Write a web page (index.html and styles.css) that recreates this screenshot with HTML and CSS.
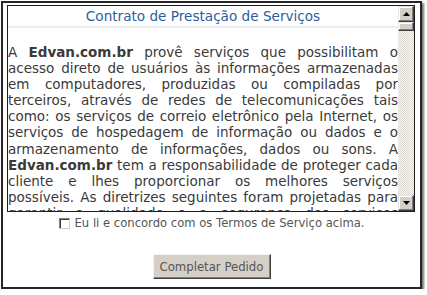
FILE: index.html
```html
<!DOCTYPE html>
<html lang="pt-BR">
<head>
<meta charset="utf-8">
<title>Contrato de Prestação de Serviços</title>
<link rel="stylesheet" href="styles.css">
</head>
<body>
<div class="frame">
  <div class="terms">
    <div class="terms-content">
      <h1 class="terms-title">Contrato de Prestação de Serviços</h1>
      <p class="terms-text">A <b>Edvan.com.br</b> provê serviços que possibilitam o acesso direto de usuários às informações armazenadas em computadores, produzidas ou compiladas por terceiros, através de redes de telecomunicações tais como: os serviços de correio eletrônico pela Internet, os serviços de hospedagem de informação ou dados e o armazenamento de informações, dados ou sons. A <b>Edvan.com.br</b> tem a responsabilidade de proteger cada cliente e lhes proporcionar os melhores serviços possíveis. As diretrizes seguintes foram projetadas para garantir a qualidade e a segurança dos serviços prestados aos clientes.</p>
    </div>
    <div class="scrollbar">
      <div class="sb-btn"><svg width="7" height="4" viewBox="0 0 7 4"><path d="M3.5 0L7 4H0z" fill="#000"/></svg></div>
      <div class="sb-thumb"></div>
      <div class="sb-track"></div>
      <div class="sb-btn"><svg width="7" height="4" viewBox="0 0 7 4"><path d="M0 0H7L3.5 4z" fill="#000"/></svg></div>
    </div>
  </div>
  <label class="agree"><span class="checkbox"></span>Eu li e concordo com os Termos de Serviço acima.</label>
  <button class="submit" type="button">Completar Pedido</button>
</div>
</body>
</html>
```

FILE: styles.css
```css
* { box-sizing: border-box; }
html, body { margin: 0; padding: 0; background: #fff; }
body { font-family: "DejaVu Sans", Verdana, sans-serif; }

.frame {
  margin: 1px 0 0 1px;
  width: 421px;
  height: 288px;
  border: 2px solid #262626;
  box-shadow: 2px 2px 2px rgba(0,0,0,0.55);
  padding: 2px 4px 0 4px;
  display: flex;
  flex-direction: column;
  align-items: flex-start;
}

.terms {
  width: 408px;
  height: 207px;
  border: 1px solid #1e1e1e;
  display: flex;
  flex: none;
  background: #fff;
}

.terms-content {
  width: 390px;
  height: 100%;
  overflow: hidden;
}

.terms-title {
  margin: 0;
  padding: 2px 0 2px;
  border-bottom: 2px solid #eeeeee;
  font-size: 13.6px;
  font-weight: normal;
  line-height: 16px;
  text-align: center;
  color: #2e5d9a;
}

.terms-text {
  margin: 16px 0 0;
  font-size: 13.5px;
  line-height: 16.1px;
  text-align: justify;
  color: #3a3a3a;
}

.scrollbar {
  width: 16px;
  height: 100%;
  display: flex;
  flex-direction: column;
}
.sb-btn, .sb-thumb {
  background: #d4d0c8;
  border: 1px solid;
  border-color: #e8e6e0 #404040 #404040 #e8e6e0;
  box-shadow: inset -1px -1px 0 #808080, inset 1px 1px 0 #fff;
}
.sb-btn {
  height: 16px;
  flex: none;
  display: flex;
  align-items: center;
  justify-content: center;
}
.sb-thumb { height: 9px; flex: none; }
.sb-track {
  flex: 1;
  background: repeating-conic-gradient(#d8d5ce 0 25%, #fbfbfa 0 50%) 0 0 / 2px 2px;
}

.agree {
  align-self: center;
  margin: 4px 0 0;
  display: flex;
  align-items: center;
  gap: 5px;
  font-size: 11.6px;
  line-height: 14px;
  color: #555;
}
.checkbox {
  width: 11px;
  height: 11px;
  border: 1px solid;
  border-color: #808080 #d4d0c8 #d4d0c8 #808080;
  box-shadow: inset 1px 1px 0 #404040;
  background: #fff;
}

.submit {
  align-self: center;
  margin: 24px 0 0;
  width: 118px;
  height: 25px;
  padding: 0;
  background: #d4d0c8;
  border: 1px solid;
  border-color: #f4f3ef #404040 #404040 #f4f3ef;
  box-shadow: inset -1px -1px 0 #808080;
  font-family: "DejaVu Sans", Verdana, sans-serif;
  font-size: 11.7px;
  color: #555;
}
```
